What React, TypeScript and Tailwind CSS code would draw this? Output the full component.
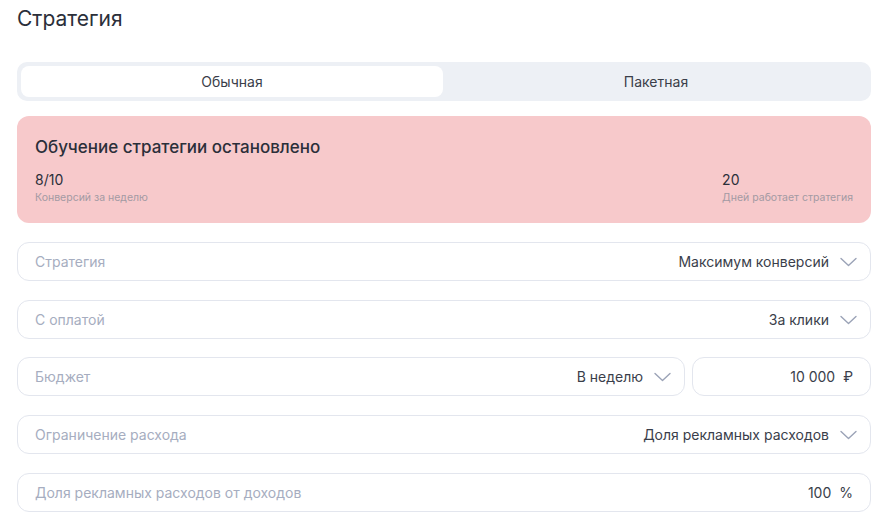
function Chevron() {
  return (
    <svg width="17" height="10" viewBox="0 0 17 10" fill="none" className="ml-[11px] shrink-0">
      <path d="M1 1.5l7.5 7 7.5-7" stroke="#9ba3b7" strokeWidth="1.4" strokeLinecap="round" strokeLinejoin="round" />
    </svg>
  )
}

function Field({
  label,
  value,
  chevron = true,
  suffix,
  className = '',
}: {
  label?: string
  value: string
  chevron?: boolean
  suffix?: string
  className?: string
}) {
  return (
    <div
      className={`flex h-[39px] items-center rounded-xl border border-[#e3e6ee] bg-white pl-[17px] ${chevron ? 'pr-[13px]' : 'pr-[17px]'} ${className}`}
    >
      {label && <span className="flex-1 truncate text-[14px] text-[#a6adc0]">{label}</span>}
      <span className={`text-[14px] text-[#3a3e4a] ${label ? '' : 'flex-1 text-right'}`}>{value}</span>
      {suffix && <span className="ml-[8px] text-[14px] text-[#3a3e4a]">{suffix}</span>}
      {chevron && <Chevron />}
    </div>
  )
}

export default function App() {
  return (
    <div className="min-h-[522px] bg-white pr-[13px] pl-[17px] pt-[5px] font-['Inter',sans-serif] text-[#2f3340]">
      <h1 className="text-[21px] leading-[28px] font-normal text-[#2b2f3a]">Стратегия</h1>

      <div className="mt-[29px] flex h-[39px] gap-[2px] rounded-[10px] bg-[#edf0f5] p-[4px]">
        <div className="flex flex-1 items-center justify-center rounded-[8px] bg-white text-[14px] text-[#3a3e49]">
          Обычная
        </div>
        <div className="flex flex-1 items-center justify-center text-[14px] text-[#3a3e49]">
          Пакетная
        </div>
      </div>

      <div className="mt-[15px] flex h-[107px] flex-col rounded-[12px] bg-[#f7c9cb] px-[18px] pt-[20px]">
        <div className="text-[17px] leading-[22px] font-medium text-[#2b2f3a]">
          Обучение стратегии остановлено
        </div>
        <div className="mt-[12px] flex justify-between">
          <div>
            <div className="text-[14px] leading-[20px] text-[#2b2f3a]">8/10</div>
            <div className="text-[10.5px] leading-[16px] text-[#a39aa3]">Конверсий за неделю</div>
          </div>
          <div className="whitespace-nowrap">
            <div className="text-[14px] leading-[20px] text-[#2b2f3a]">20</div>
            <div className="text-[10.5px] leading-[16px] text-[#a39aa3]">Дней работает стратегия</div>
          </div>
        </div>
      </div>

      <div className="mt-[19px] flex flex-col gap-[19px]">
        <Field label="Стратегия" value="Максимум конверсий" />
        <Field label="С оплатой" value="За клики" />
        <div className="-mt-[1px] flex gap-[7px]">
          <Field label="Бюджет" value="В неделю" className="flex-1" />
          <Field value="10 000" suffix="₽" chevron={false} className="w-[179px]" />
        </div>
        <Field label="Ограничение расхода" value="Доля рекламных расходов" />
        <Field label="Доля рекламных расходов от доходов" value="100" suffix="%" chevron={false} />
      </div>
    </div>
  )
}
